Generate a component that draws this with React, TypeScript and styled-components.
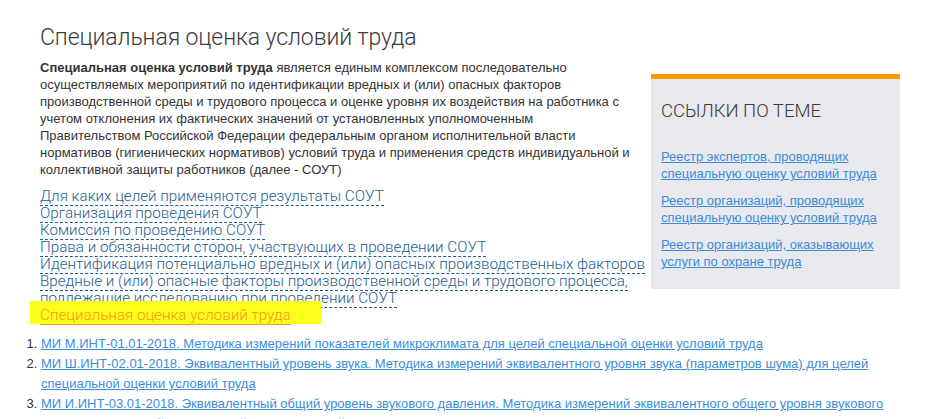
import React from "react";
import styled, { createGlobalStyle } from "styled-components";

const GlobalStyle = createGlobalStyle`
  body {
    margin: 0;
    background: #ffffff;
    font-family: "Liberation Sans", Arial, sans-serif;
    color: #333333;
  }
`;

const sout = [
  "Для каких целей применяются результаты СОУТ",
  "Организация проведения СОУТ",
  "Комиссия по проведению СОУТ",
  "Права и обязанности сторон, участвующих в проведении СОУТ",
  "Идентификация потенциально вредных и (или) опасных производственных факторов",
];

const related = [
  "Реестр экспертов, проводящих специальную оценку условий труда",
  "Реестр организаций, проводящих специальную оценку условий труда",
  "Реестр организаций, оказывающих услуги по охране труда",
];

const methods = [
  "МИ М.ИНТ-01.01-2018. Методика измерений показателей микроклимата для целей специальной оценки условий труда",
  "МИ Ш.ИНТ-02.01-2018. Эквивалентный уровень звука. Методика измерений эквивалентного уровня звука (параметров шума) для целей специальной оценки условий труда",
  "МИ И.ИНТ-03.01-2018. Эквивалентный общий уровень звукового давления. Методика измерений эквивалентного общего уровня звукового давления для целей специальной оценки условий труда",
];

export default function App() {
  return (
    <>
      <GlobalStyle />
      <Page>
        <Columns>
          <Main>
            <Title>Специальная оценка условий труда</Title>
            <Intro>
              <b>Специальная оценка условий труда</b> является единым комплексом последовательно
              осуществляемых мероприятий по идентификации вредных и (или) опасных факторов
              производственной среды и трудового процесса и оценке уровня их воздействия на работника с
              учетом отклонения их фактических значений от установленных уполномоченным
              Правительством Российской Федерации федеральным органом исполнительной власти
              нормативов (гигиенических нормативов) условий труда и применения средств индивидуальной и
              коллективной защиты работников (далее - СОУТ)
            </Intro>
            <TopicList>
              {sout.map((t) => (
                <div key={t}>
                  <TopicLink href="#">{t}</TopicLink>
                </div>
              ))}
              <div>
                <TopicLink href="#">
                  Вредные и (или) опасные факторы производственной среды и трудового процесса,
                  <br />
                  подлежащие исследованию при проведении СОУТ
                </TopicLink>
              </div>
              <Marked>
                <TopicLink href="#" $active>Специальная оценка условий труда</TopicLink>
              </Marked>
            </TopicList>
          </Main>
          <Aside>
            <AsideTitle>Ссылки по теме</AsideTitle>
            {related.map((t) => (
              <AsideLink key={t} href="#">{t}</AsideLink>
            ))}
          </Aside>
        </Columns>
        <Methods>
          {methods.map((m) => (
            <li key={m}>
              <MethodLink href="#">{m}</MethodLink>
            </li>
          ))}
        </Methods>
      </Page>
    </>
  );
}

const Page = styled.div`
  padding-top: 24px;
`;

const Columns = styled.div`
  display: grid;
  grid-template-columns: 596px 249px;
  column-gap: 15px;
  padding-left: 40px;
  align-items: start;
`;

const Main = styled.div`
  display: flex;
  flex-direction: column;
`;

const Title = styled.h1`
  margin: 0;
  font-family: "Roboto", "Noto Sans", sans-serif;
  font-weight: 300;
  font-size: 23px;
  line-height: 28px;
  letter-spacing: -0.1px;
  color: #3a3a3a;
`;

const Intro = styled.p`
  margin: 7px 0 0;
  font-size: 13px;
  line-height: 17px;
  color: #333333;
`;

const TopicList = styled.div`
  display: flex;
  flex-direction: column;
  margin-top: 10px;
  font-family: "Roboto", "Noto Sans", sans-serif;
  font-weight: 300;
  font-size: 15.2px;
  line-height: 17px;
  white-space: nowrap;
`;

const TopicLink = styled.a<{ $active?: boolean }>`
  color: ${(p) => (p.$active ? "#f7941d" : "#1d5d94")};
  text-decoration: none;
  border-bottom: 1px ${(p) => (p.$active ? "solid" : "dashed")}
    ${(p) => (p.$active ? "#f7941d" : "#1d5d94")};
`;

const Marked = styled.div`
  align-self: flex-start;
  margin: -6px 0 0 -10px;
  padding: 6px 30px 0 10px;
  background: #ffff1c;
`;

const Aside = styled.aside`
  margin-top: 50px;
  background: #e8e8ef;
  border-top: 5px solid #ff9900;
  padding: 20px 10px 19px;
  display: flex;
  flex-direction: column;
  gap: 10px;
`;

const AsideTitle = styled.h2`
  margin: 0 0 15px;
  font-family: "Roboto", "Noto Sans", sans-serif;
  font-weight: 300;
  font-size: 18.5px;
  line-height: 24px;
  text-transform: uppercase;
  color: #3a3a3a;
`;

const AsideLink = styled.a`
  font-size: 13px;
  line-height: 17px;
  color: #3d8dd6;
  text-decoration: underline;
`;

const Methods = styled.ol`
  margin: 10px 0 0;
  padding: 0 45px 0 41px;
  font-size: 13px;
  line-height: 20px;
  color: #333333;
`;

const MethodLink = styled.a`
  color: #3d8dd6;
  text-decoration: underline;
`;
